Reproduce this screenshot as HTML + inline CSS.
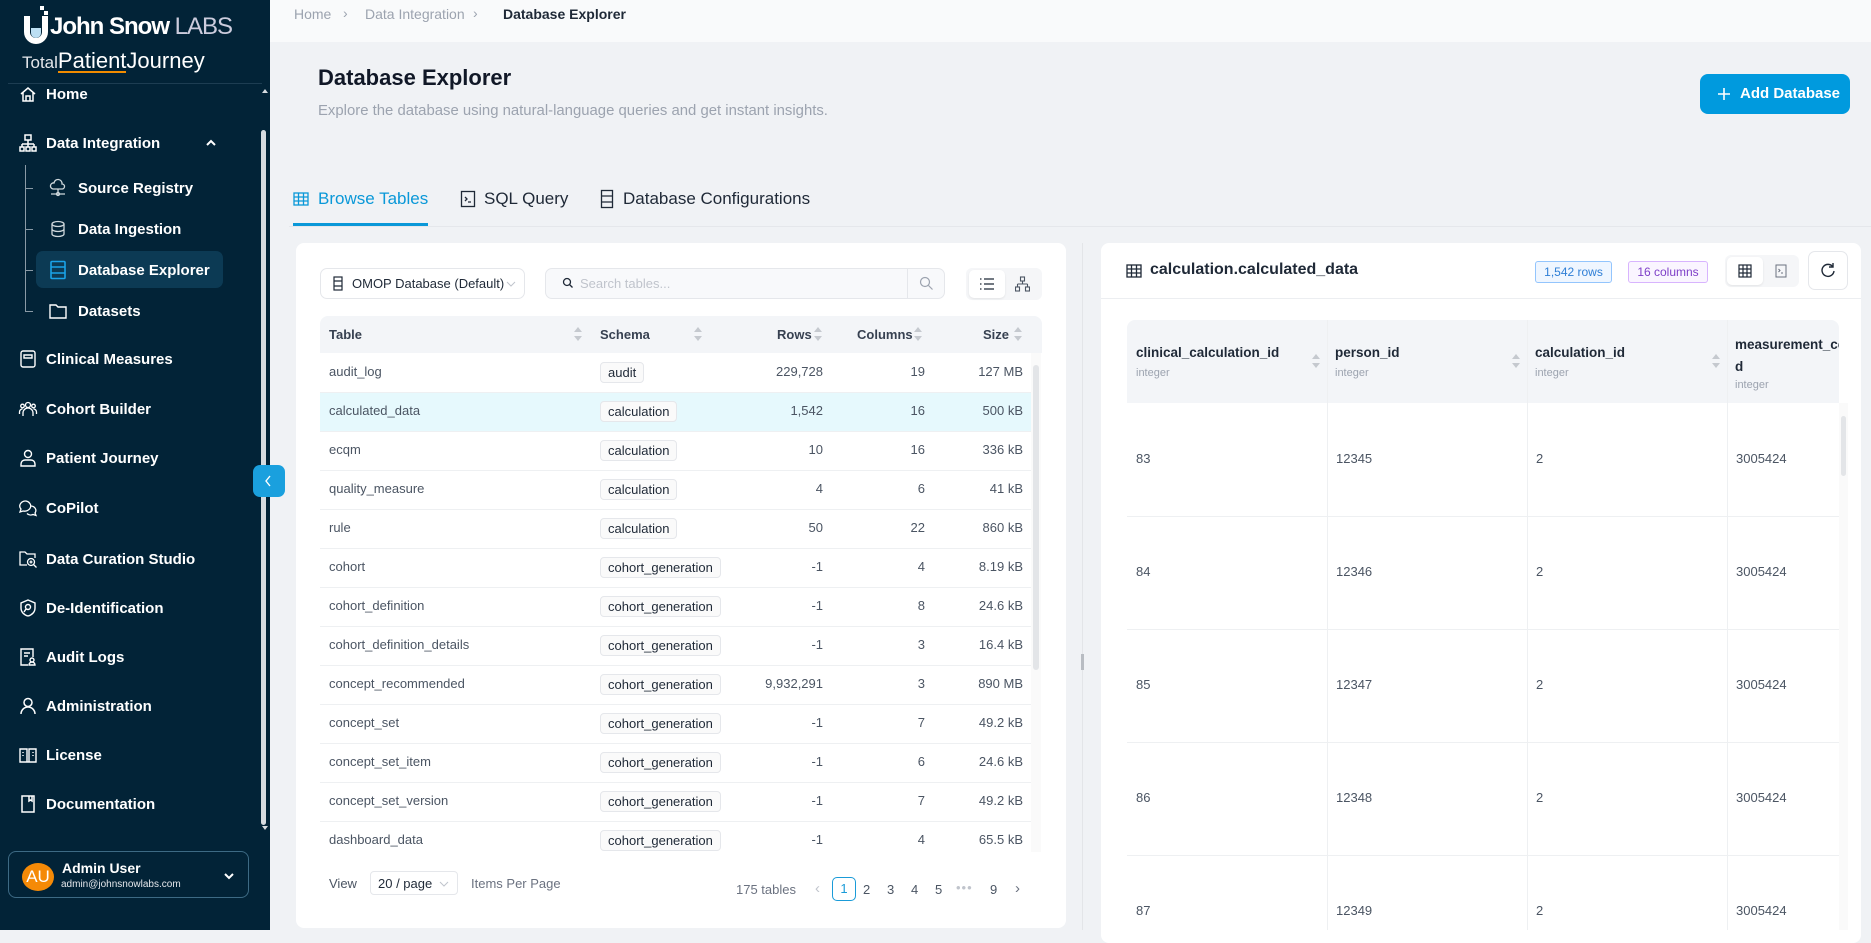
<!DOCTYPE html>
<html><head><meta charset="utf-8">
<style>
*{box-sizing:border-box;margin:0;padding:0}
body{width:1871px;height:930px;overflow:hidden;background:#f0f2f5;font-family:"Liberation Sans",sans-serif;position:relative;color:#1f2937}
.abs{position:absolute}
#sb{left:0;top:0;width:270px;height:930px;background:#022337;color:#fff}
.nav{position:absolute;left:18px;font-size:15px;font-weight:bold;color:#fff;display:flex;align-items:center;gap:8px;height:24px}
.nav svg{width:20px;height:20px;flex:none}
.sub{left:48px;font-size:15px;gap:10px}
.hdr{left:270px;top:0;width:1601px;height:42px;background:#f9fafb;font-size:14px;color:#9ca3af}
.card{background:#fff;border-radius:8px}
.th{position:absolute;top:316px;height:37px;background:#f3f5f8}
.cell{position:absolute;font-size:13px;color:#4b5563}
.badge{position:absolute;left:600px;height:21px;padding:0 7px;border:1px solid #e5e7eb;border-radius:4px;background:#fafafa;font-size:13px;color:#1f2937;line-height:19px}
.sort{position:absolute;width:8px;height:14px}
.rc{position:absolute;font-size:13px;color:#4b5563}
</style></head><body>

<div id="sb" class="abs">
  <svg class="abs" style="left:20px;top:4px" width="34" height="44" viewBox="0 0 34 44"><path d="M4 12v16a12 12 0 0 0 24 0V12h-6v16a6 6 0 0 1-12 0V12z" fill="#fff"/><path d="M11 24h10v5a5 5 0 0 1-10 0z" fill="#bcdff3"/><rect x="20" y="2" width="4" height="4" fill="#fff"/><rect x="24" y="7" width="4" height="4" fill="#fff"/></svg>
  <div class="abs" style="left:50px;top:13px;font-size:24px;font-weight:bold;letter-spacing:-1px;color:#fff">John Snow <span style="font-weight:normal;color:#ccd">LABS</span></div>
  <div class="abs" style="left:22px;top:48px;font-size:17px;color:#e5e7eb">Total<span style="font-size:22px;color:#fff;border-bottom:2px solid #f28c00;line-height:20px;display:inline-block">Patient</span><span style="font-size:22px;color:#fff">Journey</span></div>
  <div class="abs" style="left:8px;top:83px;width:254px;height:1px;background:#1d3d52"></div>

  <div class="nav" style="top:82px"><svg viewBox="0 0 20 20" fill="none" stroke="#fff" stroke-width="1.5"><path d="M3 10l7-6 7 6M5 8v9h10V8M8 17v-5h4v5"/></svg>Home</div>
  <div class="nav" style="top:131px"><svg viewBox="0 0 20 20" fill="none" stroke="#fff" stroke-width="1.5"><rect x="7" y="2" width="6" height="5"/><path d="M10 7v4M4 11h12M4 11v3M10 11v3M16 11v3"/><rect x="2" y="14" width="4" height="4"/><rect x="8" y="14" width="4" height="4"/><rect x="14" y="14" width="4" height="4"/></svg>Data Integration</div>
  <svg class="abs" style="left:205px;top:138px" width="12" height="10" viewBox="0 0 12 10"><path d="M2 7l4-4 4 4" stroke="#fff" stroke-width="2" fill="none"/></svg>
  <div class="abs" style="left:25px;top:165px;width:1px;height:146px;background:#8a9aa6"></div>
  <div class="abs" style="left:25px;top:188px;width:8px;height:1px;background:#8a9aa6"></div>
  <div class="abs" style="left:25px;top:229px;width:8px;height:1px;background:#8a9aa6"></div>
  <div class="abs" style="left:25px;top:270px;width:8px;height:1px;background:#8a9aa6"></div>
  <div class="abs" style="left:25px;top:311px;width:8px;height:1px;background:#8a9aa6"></div>
  <div class="nav sub" style="top:176px"><svg viewBox="0 0 20 20" fill="none" stroke="#cfd8dc" stroke-width="1.3"><path d="M5 11a3 3 0 0 1 1-6 4 4 0 0 1 8 1 2.5 2.5 0 0 1 0 5z M10 11v4M3 16h14"/><circle cx="10" cy="16" r="1.5"/></svg>Source Registry</div>
  <div class="nav sub" style="top:217px"><svg viewBox="0 0 20 20" fill="none" stroke="#cfd8dc" stroke-width="1.3"><ellipse cx="10" cy="5" rx="6" ry="2.5"/><path d="M4 5v10c0 1.4 2.7 2.5 6 2.5s6-1.1 6-2.5V5M4 10c0 1.4 2.7 2.5 6 2.5s6-1.1 6-2.5"/></svg>Data Ingestion</div>
  <div class="abs" style="left:36px;top:251px;width:187px;height:37px;background:#0c3a54;border-radius:7px"></div>
  <div class="nav sub" style="top:258px"><svg viewBox="0 0 20 20" fill="none" stroke="#1aa3e8" stroke-width="1.6"><rect x="3" y="1.5" width="14" height="17" rx="1"/><path d="M3 7h14M3 13h14"/></svg>Database Explorer</div>
  <div class="nav sub" style="top:299px"><svg viewBox="0 0 20 20" fill="none" stroke="#fff" stroke-width="1.4"><path d="M2 4h6l2 2h8v11H2z"/></svg>Datasets</div>

  <div class="nav" style="top:347px"><svg viewBox="0 0 20 20" fill="none" stroke="#fff" stroke-width="1.4"><rect x="3" y="2" width="14" height="16" rx="2"/><path d="M6 6h8v3H6z"/></svg>Clinical Measures</div>
  <div class="nav" style="top:397px"><svg viewBox="0 0 20 20" fill="none" stroke="#fff" stroke-width="1.3"><circle cx="10" cy="6" r="2.5"/><circle cx="4.5" cy="7" r="1.8"/><circle cx="15.5" cy="7" r="1.8"/><path d="M5 17v-3a5 5 0 0 1 10 0v3M1.5 15v-2a3 3 0 0 1 3-3M18.5 15v-2a3 3 0 0 0-3-3"/></svg>Cohort Builder</div>
  <div class="nav" style="top:446px"><svg viewBox="0 0 20 20" fill="none" stroke="#fff" stroke-width="1.4"><circle cx="10" cy="6" r="3.5"/><path d="M3 18v-2a4 4 0 0 1 4-4h6a4 4 0 0 1 4 4v2z"/></svg>Patient Journey</div>
  <div class="nav" style="top:496px"><svg viewBox="0 0 20 20" fill="none" stroke="#fff" stroke-width="1.3"><path d="M8 3a6 5 0 0 0-5 8l-1 3 3-1a6 5 0 1 0 3-10z"/><path d="M13 8a5 4.5 0 0 1 4 7l1 2.5-3-1a5 4.5 0 0 1-6-1"/></svg>CoPilot</div>
  <div class="nav" style="top:547px"><svg viewBox="0 0 20 20" fill="none" stroke="#fff" stroke-width="1.3"><path d="M9 16H2V3h5l2 2h8v4"/><circle cx="13" cy="13" r="3.5"/><path d="M15.5 15.5l3 3M13 11.5v3M11.5 13h3"/></svg>Data Curation Studio</div>
  <div class="nav" style="top:596px"><svg viewBox="0 0 20 20" fill="none" stroke="#fff" stroke-width="1.4"><path d="M10 2l7 3v5c0 4-3 7-7 8-4-1-7-4-7-8V5z"/><circle cx="10" cy="9" r="2.5"/><path d="M8 11l-2 3"/></svg>De-Identification</div>
  <div class="nav" style="top:645px"><svg viewBox="0 0 20 20" fill="none" stroke="#fff" stroke-width="1.4"><path d="M10 18H3V2h12v8"/><path d="M6 6h6M6 9h4"/><circle cx="14" cy="13" r="2"/><path d="M11 18a3 3 0 0 1 6 0z"/></svg>Audit Logs</div>
  <div class="nav" style="top:694px"><svg viewBox="0 0 20 20" fill="none" stroke="#fff" stroke-width="1.5"><circle cx="10" cy="6.5" r="4"/><path d="M3 18a7 7 0 0 1 14 0"/></svg>Administration</div>
  <div class="nav" style="top:743px"><svg viewBox="0 0 20 20" fill="none" stroke="#fff" stroke-width="1.4"><path d="M2 4h7v13H2zM11 4h7v13h-7zM9 17h2"/><path d="M5 7v1M5 10v1M15 7v1M15 10v1" stroke-dasharray="1 1"/></svg>License</div>
  <div class="nav" style="top:792px"><svg viewBox="0 0 20 20" fill="none" stroke="#fff" stroke-width="1.5"><path d="M4 2h12v16H4z"/><path d="M11 2v5l1.5-1 1.5 1V2"/></svg>Documentation</div>

  <div class="abs" style="left:261px;top:130px;width:5px;height:695px;background:#d6dbe0;border-radius:3px"></div>
  <div class="abs" style="left:262px;top:86px;width:0;height:0;border:3px solid transparent;border-bottom:4px solid #d6dbe0"></div>
  <div class="abs" style="left:262px;top:826px;width:0;height:0;border:3px solid transparent;border-top:4px solid #d6dbe0"></div>

  <div class="abs" style="left:8px;top:851px;width:241px;height:47px;border:1px solid #3d6a84;border-radius:8px"></div>
  <div class="abs" style="left:22px;top:863px;width:32px;height:28px;border-radius:50%;background:#f58a07;color:#fff;font-size:17px;text-align:center;line-height:28px">AU</div>
  <div class="abs" style="left:62px;top:860px;font-size:14px;font-weight:bold">Admin User</div>
  <div class="abs" style="left:61px;top:879px;font-size:10px;color:#e5e7eb">admin@johnsnowlabs.com</div>
  <svg class="abs" style="left:223px;top:872px" width="12" height="8" viewBox="0 0 12 8"><path d="M2 2l4 4 4-4" stroke="#fff" stroke-width="2" fill="none"/></svg>
</div>

<div class="abs" style="left:253px;top:465px;width:32px;height:32px;background:#1aa0de;border-radius:7px"></div>
<svg class="abs" style="left:263px;top:474px" width="10" height="14" viewBox="0 0 10 14"><path d="M7 2L3 7l4 5" stroke="#fff" stroke-width="1.4" fill="none"/></svg>

<div class="hdr abs">
  <span class="abs" style="left:24px;top:6px">Home</span>
  <span class="abs" style="left:73px;top:5px">›</span>
  <span class="abs" style="left:95px;top:6px">Data Integration</span>
  <span class="abs" style="left:203px;top:5px">›</span>
  <span class="abs" style="left:233px;top:6px;color:#1f2937;font-weight:bold">Database Explorer</span>
</div>

<div class="abs" style="left:318px;top:65px;font-size:22px;font-weight:bold;color:#111827">Database Explorer</div>
<div class="abs" style="left:318px;top:103px;font-size:14.9px;color:#9ca3af">Explore the database using natural-language queries and get instant insights.</div>
<div class="abs" style="left:1700px;top:74px;width:150px;height:40px;background:#009ade;border-radius:8px;color:#fff;font-size:15px;font-weight:bold;line-height:40px;padding-left:40px">Add Database</div>
<svg class="abs" style="left:1716px;top:86px" width="16" height="16" viewBox="0 0 16 16"><path d="M8 2v12M2 8h12" stroke="#fff" stroke-width="1.6"/></svg>

<div class="abs" style="left:289px;top:226px;width:1582px;height:1px;background:#e5e7eb"></div>
<div class="abs" style="left:293px;top:223px;width:135px;height:3px;background:#0a98d8"></div>
<svg class="abs" style="left:293px;top:191px" width="16" height="16" viewBox="0 0 16 16" fill="none" stroke="#0a98d8" stroke-width="1.3"><rect x="1" y="2" width="14" height="12"/><path d="M1 6h14M1 10h14M5.5 2v12M10.5 2v12"/></svg>
<div class="abs" style="left:318px;top:189px;font-size:17px;color:#0a98d8">Browse Tables</div>
<svg class="abs" style="left:460px;top:190px" width="16" height="18" viewBox="0 0 16 18" fill="none" stroke="#1f2937" stroke-width="1.3"><rect x="1.5" y="1.5" width="13" height="15"/><path d="M5 7l2 2-2 2M8 12h3"/></svg>
<div class="abs" style="left:484px;top:189px;font-size:17px;color:#1f2937">SQL Query</div>
<svg class="abs" style="left:600px;top:189px" width="14" height="20" viewBox="0 0 14 20" fill="none" stroke="#1f2937" stroke-width="1.3"><rect x="1.5" y="1.5" width="11" height="17"/><path d="M1.5 7h11M1.5 13h11"/></svg>
<div class="abs" style="left:623px;top:189px;font-size:17px;color:#1f2937">Database Configurations</div>

<div class="card abs" style="left:296px;top:243px;width:770px;height:685px"></div>
<div class="abs" style="left:320px;top:268px;width:205px;height:31px;border:1px solid #e5e7eb;border-radius:7px;background:#fff"></div>
<svg class="abs" style="left:333px;top:276px" width="10" height="15" viewBox="0 0 10 15" fill="none" stroke="#1f2937" stroke-width="1.2"><rect x="1" y="1" width="8" height="13"/><path d="M1 5h8M1 10h8"/></svg>
<div class="abs" style="left:352px;top:276px;font-size:13px;color:#1f2937">OMOP Database (Default)</div>
<svg class="abs" style="left:506px;top:280px" width="10" height="8" viewBox="0 0 10 8"><path d="M1 2l4 4 4-4" stroke="#c0c4cc" fill="none"/></svg>
<div class="abs" style="left:545px;top:268px;width:400px;height:31px;border:1px solid #e5e7eb;border-radius:7px;background:#f8f9fb"></div>
<div class="abs" style="left:907px;top:269px;width:1px;height:29px;background:#e5e7eb"></div>
<svg class="abs" style="left:562px;top:277px" width="12" height="12" viewBox="0 0 12 12" fill="none" stroke="#1f2937" stroke-width="1.3"><circle cx="5" cy="5" r="3.5"/><path d="M7.5 7.5l3 3"/></svg>
<div class="abs" style="left:580px;top:276px;font-size:13px;color:#c0c4cc">Search tables...</div>
<svg class="abs" style="left:919px;top:276px" width="15" height="15" viewBox="0 0 15 15" fill="none" stroke="#9ca3af" stroke-width="1.2"><circle cx="6" cy="6" r="4.5"/><path d="M9.5 9.5l4 4"/></svg>
<div class="abs" style="left:966px;top:268px;width:76px;height:32px;background:#f5f6f8;border-radius:6px"></div>
<div class="abs" style="left:969px;top:270px;width:36px;height:28px;background:#fff;border-radius:5px;box-shadow:0 1px 2px rgba(0,0,0,.08)"></div>
<svg class="abs" style="left:979px;top:277px" width="16" height="14" viewBox="0 0 16 14" fill="none" stroke="#1f2937" stroke-width="1.3"><path d="M5 2h10M5 7h10M5 12h10M1 2h1.5M1 7h1.5M1 12h1.5"/></svg>
<svg class="abs" style="left:1015px;top:276px" width="15" height="16" viewBox="0 0 15 16" fill="none" stroke="#4b5563" stroke-width="1.1"><rect x="5.5" y="1" width="4" height="4"/><path d="M7.5 5v3M2.5 8h10M2.5 8v3M12.5 8v3"/><rect x="0.5" y="11" width="4" height="4"/><rect x="10.5" y="11" width="4" height="4"/></svg>

<div class="th" style="left:320px;width:722px;border-radius:8px 8px 0 0"></div>
<div class="cell" style="left:329px;top:327px;font-weight:bold;color:#374151">Table</div>
<div class="cell" style="left:600px;top:327px;font-weight:bold;color:#374151">Schema</div>
<div class="cell" style="left:777px;top:327px;font-weight:bold;color:#374151">Rows</div>
<div class="cell" style="left:857px;top:327px;font-weight:bold;color:#374151">Columns</div>
<div class="cell" style="left:983px;top:327px;font-weight:bold;color:#374151">Size</div>
<svg class="abs" width="0" height="0"><defs><g id="srt"><path d="M4 0L8 5H0z" fill="#c5c9cf"/><path d="M4 14L8 9H0z" fill="#c5c9cf"/></g></defs></svg>
<svg class="sort" style="left:574px;top:327px"><use href="#srt"/></svg>
<svg class="sort" style="left:694px;top:327px"><use href="#srt"/></svg>
<svg class="sort" style="left:814px;top:327px"><use href="#srt"/></svg>
<svg class="sort" style="left:914px;top:327px"><use href="#srt"/></svg>
<svg class="sort" style="left:1014px;top:327px"><use href="#srt"/></svg>

<div class="abs" style="left:1031px;top:353px;width:10px;height:499px;background:#fafafa"></div>
<div class="abs" style="left:1033px;top:365px;width:6px;height:305px;background:#e3e5e8;border-radius:3px"></div>

<div id="rows"></div>

<div class="cell" style="left:329px;top:876px;font-size:13px">View</div>
<div class="abs" style="left:370px;top:871px;width:88px;height:24px;border:1px solid #e5e7eb;border-radius:4px"></div>
<div class="cell" style="left:378px;top:876px;color:#1f2937">20 / page</div>
<svg class="abs" style="left:439px;top:880px" width="10" height="8" viewBox="0 0 10 8"><path d="M1 2l4 4 4-4" stroke="#c0c4cc" fill="none"/></svg>
<div class="cell" style="left:471px;top:876px;color:#6b7280">Items Per Page</div>
<div class="cell" style="left:736px;top:882px;color:#6b7280">175 tables</div>
<div class="cell" style="left:815px;top:880px;color:#c0c4cc;font-size:15px">‹</div>
<div class="abs" style="left:832px;top:877px;width:24px;height:24px;border:1px solid #1a9bd8;border-radius:5px;color:#1a9bd8;font-size:13px;text-align:center;line-height:22px">1</div>
<div class="cell" style="left:863px;top:882px">2</div>
<div class="cell" style="left:887px;top:882px">3</div>
<div class="cell" style="left:911px;top:882px">4</div>
<div class="cell" style="left:935px;top:882px">5</div>
<div class="cell" style="left:956px;top:880px;color:#c0c4cc;letter-spacing:1px">•••</div>
<div class="cell" style="left:990px;top:882px">9</div>
<div class="cell" style="left:1015px;top:880px;color:#6b7280;font-size:15px">›</div>

<div class="abs" style="left:1082px;top:243px;width:1px;height:687px;background:#e3e5e8"></div>
<div class="abs" style="left:1081px;top:654px;width:3px;height:16px;background:#b8bcc2"></div>

<div class="card abs" style="left:1101px;top:243px;width:760px;height:700px"></div>
<div class="abs" style="left:1101px;top:298px;width:760px;height:1px;background:#eceef1"></div>
<svg class="abs" style="left:1126px;top:263px" width="16" height="16" viewBox="0 0 16 16" fill="none" stroke="#1f2937" stroke-width="1.3"><rect x="1" y="2" width="14" height="12"/><path d="M1 6h14M1 10h14M5.5 2v12M10.5 2v12"/></svg>
<div class="abs" style="left:1150px;top:261px;font-size:16px;font-weight:bold;color:#1f2937">calculation.calculated_data</div>
<div class="abs" style="left:1535px;top:261px;width:77px;height:22px;border:1px solid #93c5fd;border-radius:3px;background:#eff6ff;color:#2f7fd6;font-size:12px;text-align:center;line-height:20px">1,542 rows</div>
<div class="abs" style="left:1628px;top:261px;width:80px;height:22px;border:1px solid #d8b4fe;border-radius:3px;background:#faf5ff;color:#7e3fc8;font-size:12px;text-align:center;line-height:20px">16 columns</div>
<div class="abs" style="left:1725px;top:255px;width:74px;height:32px;background:#f5f6f8;border-radius:6px"></div>
<div class="abs" style="left:1727px;top:257px;width:36px;height:28px;background:#fff;border-radius:5px;box-shadow:0 1px 2px rgba(0,0,0,.08)"></div>
<svg class="abs" style="left:1738px;top:264px" width="14" height="14" viewBox="0 0 14 14" fill="none" stroke="#1f2937" stroke-width="1.2"><rect x="1" y="1" width="12" height="12"/><path d="M1 5h12M1 9h12M5 1v12M9 1v12"/></svg>
<svg class="abs" style="left:1775px;top:264px" width="12" height="14" viewBox="0 0 12 14" fill="none" stroke="#6b7280" stroke-width="1"><rect x="1" y="1" width="10" height="12"/><path d="M3.5 5l1.5 1.5-1.5 1.5M6 9h2"/></svg>
<div class="abs" style="left:1808px;top:251px;width:40px;height:39px;border:1px solid #e5e7eb;border-radius:7px;background:#fff"></div>
<svg class="abs" style="left:1820px;top:262px" width="16" height="16" viewBox="0 0 16 16" fill="none" stroke="#1f2937" stroke-width="1.4"><path d="M13 5A6 6 0 1 0 14 9"/><path d="M13 1v4H9"/></svg>

<div class="abs" style="left:1127px;top:320px;width:712px;height:83px;background:#f3f5f8;border-radius:8px 8px 0 0"></div>
<div id="rcol"></div>
<div class="abs" style="left:1839px;top:403px;width:9px;height:527px;background:#fafafa"></div>
<div class="abs" style="left:1841px;top:416px;width:5px;height:60px;background:#e3e5e8;border-radius:3px"></div>

<script>
var rows=[["audit_log","audit","229,728","19","127 MB"],["calculated_data","calculation","1,542","16","500 kB"],["ecqm","calculation","10","16","336 kB"],["quality_measure","calculation","4","6","41 kB"],["rule","calculation","50","22","860 kB"],["cohort","cohort_generation","-1","4","8.19 kB"],["cohort_definition","cohort_generation","-1","8","24.6 kB"],["cohort_definition_details","cohort_generation","-1","3","16.4 kB"],["concept_recommended","cohort_generation","9,932,291","3","890 MB"],["concept_set","cohort_generation","-1","7","49.2 kB"],["concept_set_item","cohort_generation","-1","6","24.6 kB"],["concept_set_version","cohort_generation","-1","7","49.2 kB"],["dashboard_data","cohort_generation","-1","4","65.5 kB"]];
var h="";
rows.forEach(function(r,i){var t=353+i*39;
h+='<div class="abs" style="left:320px;top:'+t+'px;width:711px;height:'+(i==12?38:39)+'px;background:'+(i==1?'#e6f9fd':'#fff')+';border-top:'+(i?'1px solid #eef0f2':'0')+'"></div>';
h+='<div class="cell" style="left:329px;top:'+(t+11)+'px">'+r[0]+'</div>';
h+='<div class="badge" style="top:'+(t+9)+'px">'+r[1]+'</div>';
h+='<div class="cell" style="right:1048px;top:'+(t+11)+'px">'+r[2]+'</div>';
h+='<div class="cell" style="right:946px;top:'+(t+11)+'px">'+r[3]+'</div>';
h+='<div class="cell" style="right:848px;top:'+(t+11)+'px">'+r[4]+'</div>';});
document.getElementById("rows").outerHTML=h;
var g="";var xs=[1127,1327,1527,1727];
g+='<div class="abs" style="left:1136px;top:345px;font-size:13.5px;font-weight:bold;color:#1f2937">clinical_calculation_id</div>';
g+='<div class="abs" style="left:1335px;top:345px;font-size:13.5px;font-weight:bold;color:#1f2937">person_id</div>';
g+='<div class="abs" style="left:1535px;top:345px;font-size:13.5px;font-weight:bold;color:#1f2937">calculation_id</div>';
g+='<div class="abs" style="left:1735px;top:334px;font-size:13.5px;font-weight:bold;color:#1f2937;width:104px;overflow:hidden;white-space:nowrap;line-height:22px">measurement_co<br>d</div>';
[1136,1335,1535].forEach(function(x){g+='<div class="abs" style="left:'+x+'px;top:367px;font-size:11px;color:#9ca3af">integer</div>';});
g+='<div class="abs" style="left:1735px;top:379px;font-size:11px;color:#9ca3af">integer</div>';
[1312,1512,1712].forEach(function(x){g+='<svg class="sort" style="left:'+x+'px;top:354px"><use href="#srt"/></svg>';});
[1327,1527,1727].forEach(function(x){g+='<div class="abs" style="left:'+x+'px;top:320px;width:1px;height:610px;background:#eef0f2"></div>';});
for(var i=0;i<5;i++){var t=403+i*113;
if(i)g+='<div class="abs" style="left:1127px;top:'+t+'px;width:712px;height:1px;background:#eef0f2"></div>';
var v=[String(83+i),String(12345+i),"2","3005424"];
v.forEach(function(s,j){g+='<div class="rc" style="left:'+(xs[j]+9)+'px;top:'+(t+48)+'px">'+s+'</div>';});}
document.getElementById("rcol").outerHTML=g;
</script>
</body></html>
